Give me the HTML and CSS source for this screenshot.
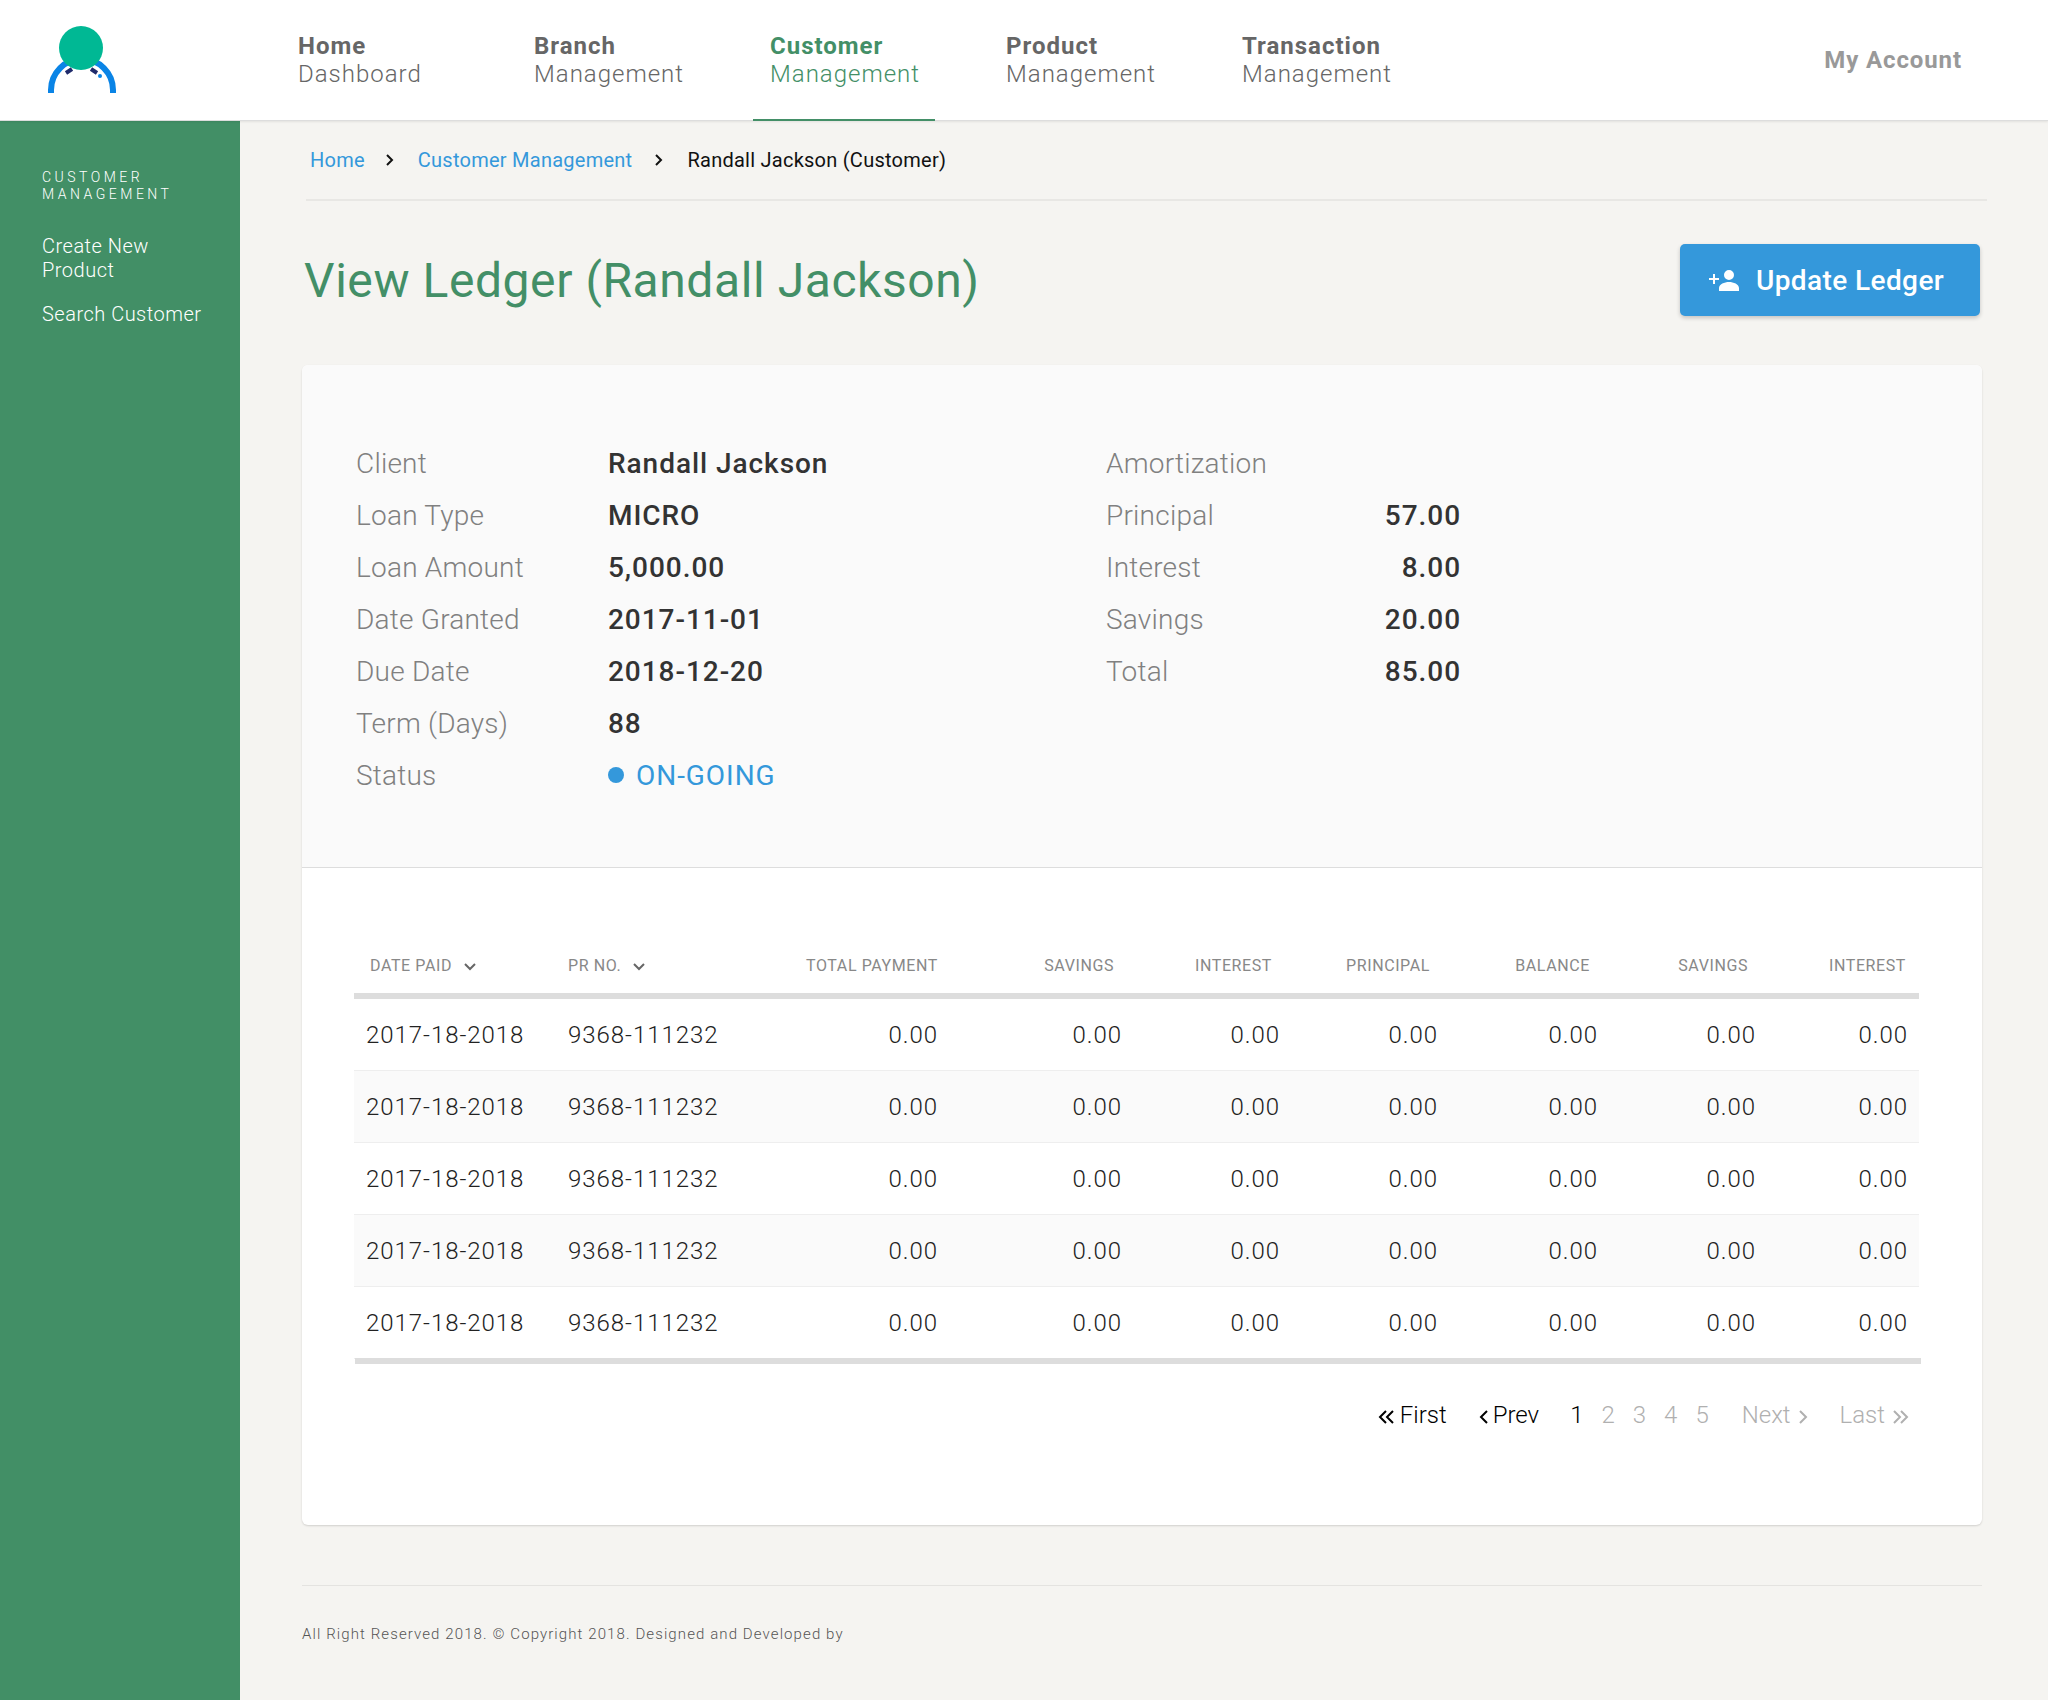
FILE: index.html
```html
<!DOCTYPE html>
<html lang="en">
<head>
  <meta charset="UTF-8" />
  <title>View Ledger</title>
  <link rel="stylesheet" href="styles.css">
</head>
<body>
  <header class="topbar">
    <a class="logo" href="#">
      <svg width="110" height="100" viewBox="0 0 110 100">
        <path d="M21 83 V80 A31 31 0 0 1 83 80 V83" fill="none" stroke="#0a84e6" stroke-width="6"/>
        <path d="M36 63 L42 59 M61 59 L67 63" stroke="#1f2a6b" stroke-width="4" fill="none"/>
        <circle cx="70" cy="66" r="2" fill="#0a84e6"/>
        <circle cx="51" cy="38" r="22" fill="#00b894"/>
      </svg>
    </a>
    <nav class="mainnav">
      <a href="#"><b>Home</b>Dashboard</a>
      <a href="#"><b>Branch</b>Management</a>
      <a href="#" class="active"><b>Customer</b>Management</a>
      <a href="#"><b>Product</b>Management</a>
      <a href="#"><b>Transaction</b>Management</a>
    </nav>
    <a class="account" href="#">My Account</a>
  </header>

  <div class="layout">
    <aside class="sidebar">
      <h4>Customer Management</h4>
      <a href="#">Create New Product</a>
      <a href="#">Search Customer</a>
    </aside>

    <main class="content">
      <div class="crumbs">
        <a href="#">Home</a>
        <svg class="crumb-sep" width="10" height="14" viewBox="0 0 10 14"><path d="M2 2l5 5-5 5" fill="none" stroke="#111" stroke-width="2"/></svg>
        <a href="#">Customer Management</a>
        <svg class="crumb-sep" width="10" height="14" viewBox="0 0 10 14"><path d="M2 2l5 5-5 5" fill="none" stroke="#111" stroke-width="2"/></svg>
        <span>Randall Jackson (Customer)</span>
      </div>

      <div class="title-row">
        <h1>View Ledger (Randall Jackson)</h1>
        <button class="btn-update">
          <svg width="32" height="22" viewBox="0 0 32 22"><path fill="#fff" d="M20 10a5 5 0 1 0 0-10 5 5 0 0 0 0 10zM20 12c-4.500 0-10 2.200-10 6v3h20v-3c0-3.800-5.500-6-10-6zM6 8V4H4v4H0v2h4v4h2v-4h4V8z"/></svg>
          Update Ledger
        </button>
      </div>

      <section class="card">
        <div class="summary">
          <dl class="info info-left">
            <dt>Client</dt><dd>Randall Jackson</dd>
            <dt>Loan Type</dt><dd>MICRO</dd>
            <dt>Loan Amount</dt><dd>5,000.00</dd>
            <dt>Date Granted</dt><dd>2017-11-01</dd>
            <dt>Due Date</dt><dd>2018-12-20</dd>
            <dt>Term (Days)</dt><dd>88</dd>
            <dt>Status</dt><dd class="status"><i></i>ON-GOING</dd>
          </dl>
          <dl class="info info-right">
            <dt>Amortization</dt><dd></dd>
            <dt>Principal</dt><dd>57.00</dd>
            <dt>Interest</dt><dd>8.00</dd>
            <dt>Savings</dt><dd>20.00</dd>
            <dt>Total</dt><dd>85.00</dd>
          </dl>
        </div>

        <div class="ledger">
          <table>
            <thead>
              <tr>
                <th class="left first">Date Paid <svg class="sort" width="12" height="8" viewBox="0 0 12 8"><path d="M1 1l5 5 5-5" fill="none" stroke="#666" stroke-width="2"/></svg></th>
                <th class="left">PR No. <svg class="sort" width="12" height="8" viewBox="0 0 12 8"><path d="M1 1l5 5 5-5" fill="none" stroke="#666" stroke-width="2"/></svg></th>
                <th class="flush">Total Payment</th>
                <th>Savings</th>
                <th>Interest</th>
                <th>Principal</th>
                <th>Balance</th>
                <th>Savings</th>
                <th class="end">Interest</th>
              </tr>
            </thead>
            <tbody>
              <tr><td class="left">2017-18-2018</td><td class="left">9368-111232</td><td>0.00</td><td>0.00</td><td>0.00</td><td>0.00</td><td>0.00</td><td>0.00</td><td>0.00</td></tr>
              <tr><td class="left">2017-18-2018</td><td class="left">9368-111232</td><td>0.00</td><td>0.00</td><td>0.00</td><td>0.00</td><td>0.00</td><td>0.00</td><td>0.00</td></tr>
              <tr><td class="left">2017-18-2018</td><td class="left">9368-111232</td><td>0.00</td><td>0.00</td><td>0.00</td><td>0.00</td><td>0.00</td><td>0.00</td><td>0.00</td></tr>
              <tr><td class="left">2017-18-2018</td><td class="left">9368-111232</td><td>0.00</td><td>0.00</td><td>0.00</td><td>0.00</td><td>0.00</td><td>0.00</td><td>0.00</td></tr>
              <tr><td class="left">2017-18-2018</td><td class="left">9368-111232</td><td>0.00</td><td>0.00</td><td>0.00</td><td>0.00</td><td>0.00</td><td>0.00</td><td>0.00</td></tr>
            </tbody>
          </table>
          <div class="table-end"></div>

          <div class="pager">
            <a href="#" class="on"><svg class="chev chev-before" width="20" height="14" viewBox="0 0 20 14"><path d="M9 1L3 7l6 6M16 1l-6 6 6 6" fill="none" stroke="currentColor" stroke-width="2"/></svg>First</a>
            <a href="#" class="on"><svg class="chev chev-before" width="12" height="14" viewBox="0 0 12 14"><path d="M9 1L3 7l6 6" fill="none" stroke="currentColor" stroke-width="2"/></svg>Prev</a>
            <span class="pages">
              <a href="#" class="on">1</a>
              <a href="#">2</a>
              <a href="#">3</a>
              <a href="#">4</a>
              <a href="#">5</a>
            </span>
            <a href="#">Next<svg class="chev chev-after" width="12" height="14" viewBox="0 0 12 14"><path d="M3 1l6 6-6 6" fill="none" stroke="currentColor" stroke-width="2"/></svg></a>
            <a href="#">Last<svg class="chev chev-after" width="20" height="14" viewBox="0 0 20 14"><path d="M3 1l6 6-6 6M10 1l6 6-6 6" fill="none" stroke="currentColor" stroke-width="2"/></svg></a>
          </div>
        </div>
      </section>

      <footer class="foot">All Right Reserved 2018. © Copyright 2018. Designed and Developed by</footer>
    </main>
  </div>
</body>
</html>
```

FILE: styles.css
```css
* {
  box-sizing: border-box;
}
body {
  margin: 0;
  font-family: Roboto, Arial, sans-serif;
  background: #f5f4f1;
  color: #333;
}
a {
  text-decoration: none;
}
.topbar {
  display: flex;
  align-items: stretch;
  height: 121px;
  background: #fff;
  border-bottom: 1px solid #ddd;
  box-shadow: 0 1px 2px rgba(0,0,0,0.08);
  position: relative;
}
.logo {
  width: 282px;
  padding: 10px 0 0 30px;
}
.logo svg {
  display: block;
}
.mainnav {
  display: flex;
  flex: 1;
}
.mainnav a {
  display: block;
  width: 236px;
  padding: 32px 16px 0;
  font-size: 24px;
  line-height: 28px;
  letter-spacing: 1px;
  color: #666;
  font-weight: 300;
}
.mainnav a b {
  display: block;
  font-weight: 700;
}
.mainnav a.active {
  color: #438f67;
  position: relative;
}
.mainnav a.active::after {
  content: "";
  position: absolute;
  left: -1px;
  bottom: -1px;
  width: 182px;
  height: 2px;
  background: #438f67;
}
.account {
  align-self: center;
  margin-right: 86px;
  font-size: 24px;
  font-weight: 700;
  letter-spacing: 0.9px;
  color: #999;
}
.layout {
  display: flex;
  min-height: 1579px;
}
.sidebar {
  width: 240px;
  flex: none;
  background: #428f66;
  padding: 48px 20px 0 42px;
  color: #fff;
}
.sidebar h4 {
  margin: 0 0 31px;
  font-size: 14px;
  line-height: 17px;
  font-weight: 300;
  letter-spacing: 3.5px;
  text-transform: uppercase;
}
.sidebar a {
  display: block;
  margin-bottom: 20px;
  color: #fff;
  font-size: 20px;
  line-height: 24px;
  letter-spacing: 0.5px;
  font-weight: 300;
}
.content {
  flex: 1;
  padding: 0 66px 0 62px;
}
.crumbs {
  display: flex;
  align-items: center;
  height: 80px;
  margin: 0 -5px 0 4px;
  padding-left: 4px;
  border-bottom: 2px solid #e8e7e4;
  font-size: 20px;
  letter-spacing: 0.25px;
  color: #111;
}
.crumbs a {
  color: #3498db;
}
.crumb-sep {
  margin: 0 23px 0 20px;
}
.crumb-sep:last-of-type {
  margin: 0 23px 0 22px;
}
.title-row {
  display: flex;
  justify-content: space-between;
  align-items: center;
  margin-top: 43px;
  padding: 0 2px;
}
h1 {
  margin: 0;
  font-size: 48px;
  font-weight: 400;
  letter-spacing: 0.57px;
  color: #438f67;
}
.btn-update {
  display: flex;
  align-items: center;
  gap: 15px;
  width: 300px;
  height: 72px;
  padding: 1px 29px 0;
  background: #3498db;
  color: #fff;
  border: none;
  border-radius: 5px;
  font-family: inherit;
  font-size: 28px;
  font-weight: 500;
  letter-spacing: 0.4px;
  box-shadow: 0 2px 4px rgba(0,0,0,0.2);
}
.card {
  margin-top: 49px;
  background: #fff;
  border-radius: 6px;
  box-shadow: 0 1px 2px rgba(0,0,0,0.15);
  height: 1160px;
}
.summary {
  display: flex;
  height: 503px;
  padding: 72px 54px 0;
  background: #fafafa;
  border-bottom: 1px solid #ddd;
  border-radius: 6px 6px 0 0;
}
.info {
  display: grid;
  margin: 0;
  grid-auto-rows: 52px;
  align-items: center;
  align-content: start;
  font-size: 28px;
}
.info-left {
  width: 750px;
  grid-template-columns: 252px 1fr;
}
.info-right {
  grid-template-columns: 200px 155px;
}
.info dt {
  color: #808080;
  font-weight: 300;
  letter-spacing: 0.22px;
}
.info dd {
  margin: 0;
  font-weight: 500;
  letter-spacing: 0.95px;
  color: #333;
}
.info-right dd {
  text-align: right;
}
.info .status {
  display: flex;
  align-items: center;
  color: #3498db;
  font-weight: 400;
}
.status i {
  width: 16px;
  height: 16px;
  margin-right: 12px;
  border-radius: 50%;
  background: #3498db;
}
.ledger {
  padding: 68px 63px 0 52px;
}
table {
  width: 100%;
  border-collapse: separate;
  border-spacing: 0;
  table-layout: fixed;
}
th {
  height: 63px;
  padding: 2px 8px 0 0;
  text-align: right;
  font-size: 16px;
  font-weight: 400;
  letter-spacing: 0.6px;
  color: #888;
  text-transform: uppercase;
  border-bottom: 6px solid #ddd;
}
th.flush {
  padding-right: 0;
}
th.end {
  padding-right: 13px;
}
th.left, td.left {
  text-align: left;
}
th.first {
  padding-left: 16px;
}
th:nth-child(1) { width: 214px; }
th:nth-child(2) { width: 170px; }
th:nth-child(3) { width: 200px; }
th:nth-child(4) { width: 184px; }
th:nth-child(5) { width: 158px; }
th:nth-child(6) { width: 158px; }
th:nth-child(7) { width: 160px; }
th:nth-child(8) { width: 158px; }
.sort {
  margin-left: 7px;
}
td {
  height: 72px;
  padding: 0;
  text-align: right;
  font-size: 24px;
  font-weight: 300;
  letter-spacing: 0.95px;
  color: #222;
  border-bottom: 1px solid #eee;
}
td.left:first-child {
  padding-left: 12px;
}
td:last-child {
  padding-right: 11px;
}
tbody tr:nth-child(even) {
  background: #fafafa;
}
.table-end {
  height: 6px;
  margin: -1px -2px 0 1px;
  background: #ddd;
  position: relative;
}
.pager {
  display: flex;
  justify-content: flex-end;
  align-items: center;
  gap: 31px;
  margin-top: 37px;
  padding-right: 8px;
  font-size: 24px;
  font-weight: 300;
}
.pager a {
  color: #b0b0b0;
}
.pager a.on {
  color: #000;
}
.pages {
  display: flex;
  gap: 18px;
  margin-right: 2px;
}
.chev {
  vertical-align: -1px;
}
.chev-before {
  margin-right: 3px;
}
.chev-after {
  margin-left: 6px;
}
.foot {
  margin-top: 60px;
  padding-top: 39px;
  border-top: 1px solid #e4e3e0;
  font-size: 15px;
  font-weight: 300;
  letter-spacing: 1.1px;
  color: #555;
}
```
